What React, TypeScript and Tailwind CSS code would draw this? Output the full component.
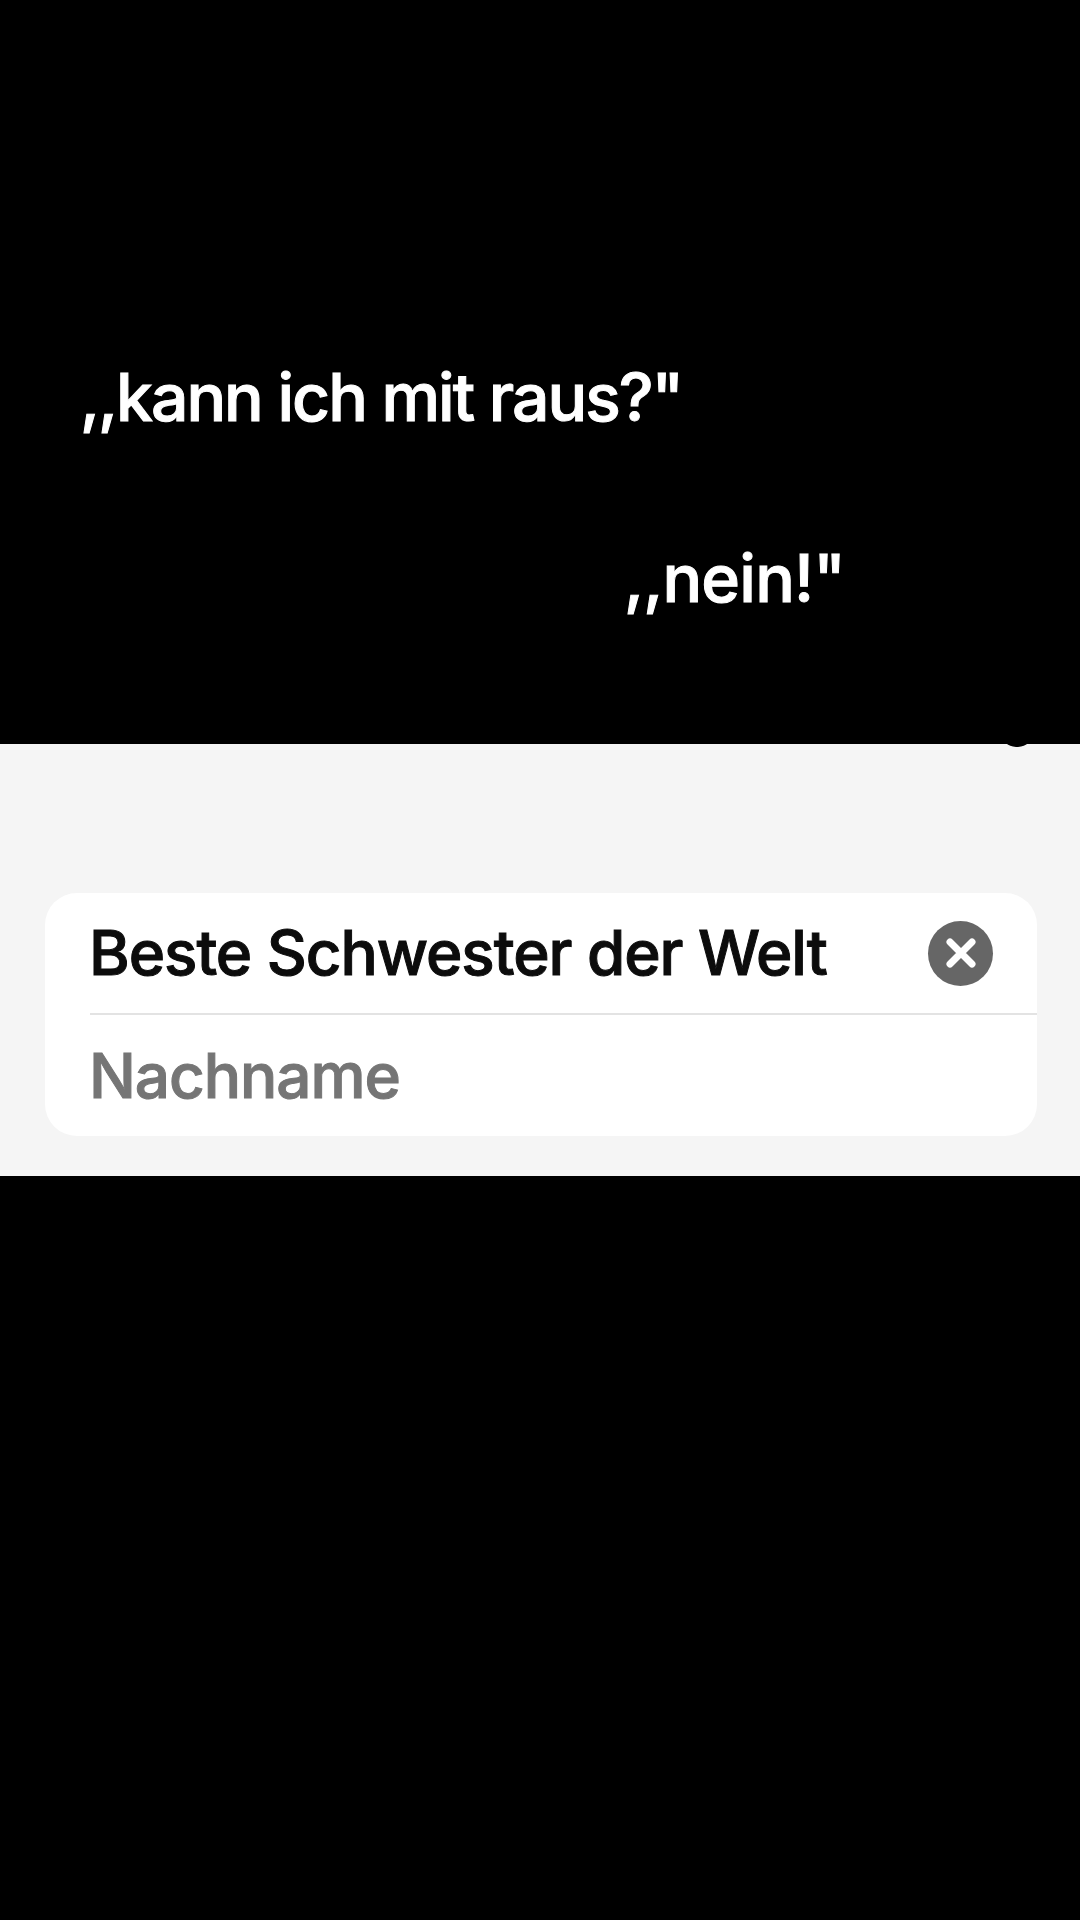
export default function App() {
  return (
    <div className="w-[1080px] h-[1920px] overflow-hidden bg-black font-['Inter',Arial,sans-serif]">
      <section className="relative h-[744px] pt-[360px] text-[66px] leading-[75px] font-medium tracking-[-2px] text-white [-webkit-text-stroke:1px_white]">
        <p className="pl-[80px]">,,kann ich mit raus?"</p>
        <p className="pl-[624px] mt-[106px] tracking-[-0.8px]">,,nein!"</p>
      </section>

      <section className="relative h-[432px] bg-[#f5f5f5] px-[45px] pt-[149px]">
        <div className="absolute left-[1001px] -top-[12px] w-[32px] h-[15px] rounded-b-full bg-black" />
        <div className="w-[992px] h-[243px] rounded-[32px] bg-white pl-[45px]">
          <div className="h-[122px] flex items-center justify-between border-b-2 border-[#e3e3e3] pr-[44px]">
            <span className="-ml-px text-[62px] leading-none font-medium tracking-[-1.05px] text-[#0c0c0c] [-webkit-text-stroke:1px_#0c0c0c]">Beste Schwester der Welt</span>
            <div className="w-[65px] h-[65px] rounded-full bg-[#666666] flex items-center justify-center">
              <svg width="32" height="32" viewBox="0 0 32 32" fill="none" stroke="white" strokeWidth="7" strokeLinecap="round">
                <path d="M5 5 L27 27 M27 5 L5 27" />
              </svg>
            </div>
          </div>
          <div className="h-[121px] flex items-center">
            <span className="-ml-px text-[62px] leading-none font-medium tracking-[-1.05px] text-[#757575] [-webkit-text-stroke:1px_#757575]">Nachname</span>
          </div>
        </div>
      </section>
    </div>
  );
}
